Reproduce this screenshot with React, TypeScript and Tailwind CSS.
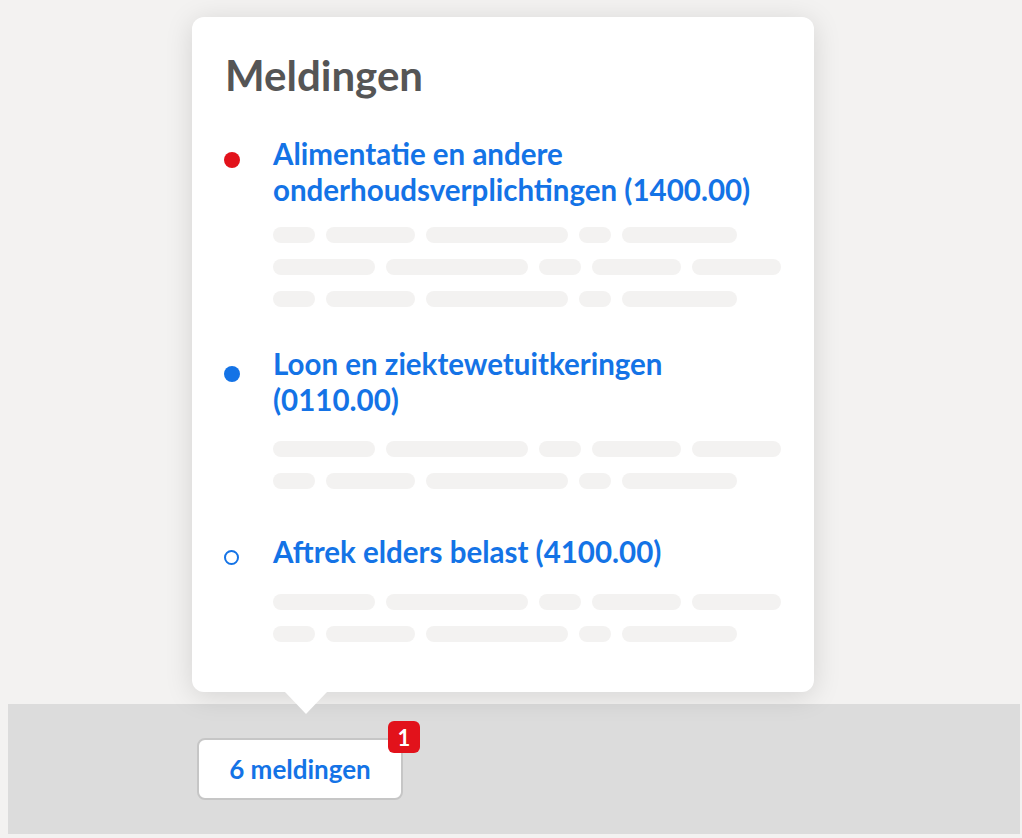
import React from 'react';

type Item = {
  title: string;
  dot: 'red' | 'blue' | 'open';
  dotTop: string;
  gap: string;
  barsGap: string;
  rows: ('a' | 'b')[];
};

const rowA = [42, 89, 142, 32, 115];
const rowB = [102, 142, 42, 89, 89];

const items: Item[] = [
  {
    title: 'Alimentatie en andere onderhoudsverplichtingen (1400.00)',
    dot: 'red',
    dotTop: 'mt-[16px]',
    gap: 'mt-[37px]',
    barsGap: 'mt-[19px]',
    rows: ['a', 'b', 'a'],
  },
  {
    title: 'Loon en ziektewetuitkeringen (0110.00)',
    dot: 'blue',
    dotTop: 'mt-[20px]',
    gap: 'mt-[39px]',
    barsGap: 'mt-[23px]',
    rows: ['b', 'a'],
  },
  {
    title: 'Aftrek elders belast (4100.00)',
    dot: 'open',
    dotTop: 'mt-[16px]',
    gap: 'mt-[45px]',
    barsGap: 'mt-[24px]',
    rows: ['b', 'a'],
  },
];

function Dot({ kind }: { kind: Item['dot'] }) {
  if (kind === 'red') return <span className="block w-4 h-4 rounded-full bg-[#e2121b]" />;
  if (kind === 'blue') return <span className="block w-4 h-4 rounded-full bg-[#1473e6]" />;
  return <span className="block w-[15px] h-[15px] rounded-full border-2 border-[#1473e6]" />;
}

function Bars({ row }: { row: 'a' | 'b' }) {
  const widths = row === 'a' ? rowA : rowB;
  return (
    <div className="flex gap-[11px]">
      {widths.map((w, i) => (
        <span key={i} className="block h-4 rounded-full bg-[#f3f2f1]" style={{ width: w }} />
      ))}
    </div>
  );
}

function App() {
  return (
    <div className="min-h-screen bg-[#f3f2f1] font-['Lato','Liberation_Sans',sans-serif] pt-[17px]">
      <div className="relative ml-[192px] w-[622px] bg-white rounded-xl shadow-[0_4px_28px_rgba(0,0,0,0.13)] pt-[34px] pl-[33px] pr-[33px] pb-[50px]">
        <h2 className="text-[42px] leading-[48px] font-bold text-[#555555]">Meldingen</h2>
        {items.map((item) => (
          <div key={item.title} className={`flex ${item.gap}`}>
            <div className="w-[49px] shrink-0 -ml-px">
              <div className={item.dotTop}>
                <Dot kind={item.dot} />
              </div>
            </div>
            <div className="flex-1">
              <div className="text-[29.5px] leading-[36px] font-bold text-[#1473e6]">{item.title}</div>
              <div className={`${item.barsGap} flex flex-col gap-4`}>
                {item.rows.map((r, i) => (
                  <Bars key={i} row={r} />
                ))}
              </div>
            </div>
          </div>
        ))}
        <span className="absolute left-[93px] -bottom-[22px] w-0 h-0 border-l-[21px] border-r-[21px] border-t-[22px] border-l-transparent border-r-transparent border-t-white" />
      </div>

      <div className="mt-[12px] ml-2 mr-[2px] h-[130px] bg-[#dcdcdc] pt-[34px] pl-[189px]">
        <div className="relative inline-block">
          <button className="w-[206px] h-[62px] rounded-lg border-2 border-[#c6c6c6] bg-white text-[26px] font-bold text-[#1473e6]">
            6 meldingen
          </button>
          <span className="absolute -top-[17px] -right-[17px] w-8 h-8 rounded-md bg-[#e2121b] text-white text-[22px] font-bold flex items-center justify-center">
            1
          </span>
        </div>
      </div>
    </div>
  );
}

export default App;
